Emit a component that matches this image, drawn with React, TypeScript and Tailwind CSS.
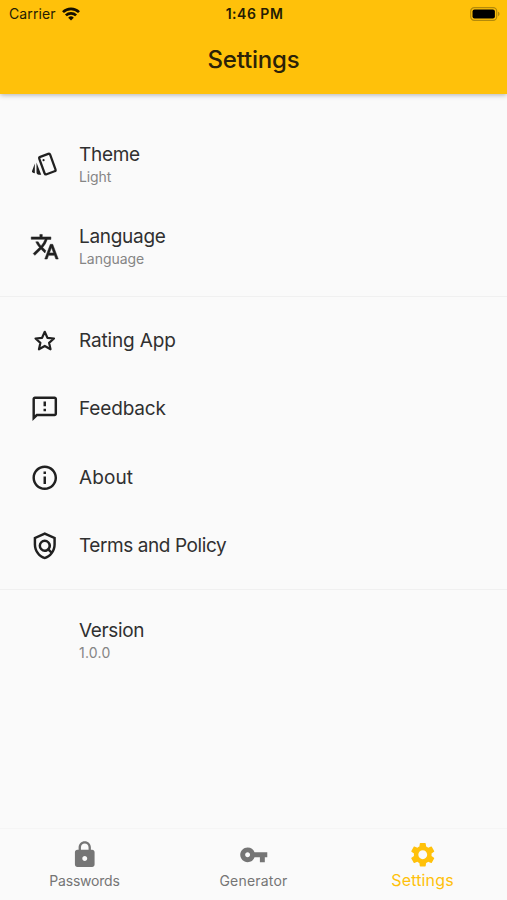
import React from 'react';
import {
  MdInfoOutline,
  MdLock,
  MdOutlineFeedback,
  MdOutlinePolicy,
  MdSettings,
  MdVpnKey,
} from 'react-icons/md';

interface Item {
  title: string;
  subtitle?: string;
  icon?: React.ComponentType<{ className?: string }>;
  titleClass: string;
  subtitleClass?: string;
}

const CardsIcon: React.FC<{ className?: string }> = ({ className }) => (
  <svg className={className} viewBox="0 0 30 30" fill="none">
    <rect
      x="11.8"
      y="4.9"
      width="11.8"
      height="18.8"
      rx="1.6"
      stroke="currentColor"
      strokeWidth="2.3"
      transform="rotate(-20 17.7 14.3)"
    />
    <circle cx="13.8" cy="10.3" r="1.1" fill="currentColor" />
    <path d="M4.9 13.8v9.9c-1.9-.4-3.1-1.2-2.9-2.2zM6.6 12.8l4.8 12.4H9.1c-1.6 0-2.5-1.1-2.5-2.6z" fill="currentColor" />
  </svg>
);

const TranslateIcon: React.FC<{ className?: string }> = ({ className }) => (
  <svg className={className} viewBox="0 0 24 24" fill="currentColor" stroke="currentColor" strokeWidth="0.4">
    <path d="M12.87 15.07l-2.54-2.51.03-.03A17.52 17.52 0 0 0 14.07 6H17V4h-7V2H8v2H1v1.99h11.17C11.5 7.92 10.44 9.75 9 11.35 8.07 10.32 7.3 9.19 6.69 8h-2c.73 1.63 1.73 3.17 2.98 4.56l-5.09 5.02L4 19l5-5 3.11 3.11.76-2.04zM18.5 10h-2L12 22h2l1.12-3h4.75L21 22h2l-4.5-12zm-2.62 7l1.62-4.33L19.12 17h-3.24z" />
  </svg>
);

const StarIcon: React.FC<{ className?: string }> = ({ className }) => (
  <svg className={className} viewBox="0 0 30 30" fill="none">
    <path
      d="M15 5.9l2.7 6.1 6.7.7-5 4.4 1.5 6.6-5.9-3.4-5.9 3.4 1.5-6.6-5-4.4 6.7-.7z"
      stroke="currentColor"
      strokeWidth="2.2"
      strokeLinejoin="round"
    />
  </svg>
);

const GENERAL: Item[] = [
  { title: 'Theme', subtitle: 'Light', icon: CardsIcon, titleClass: 'tracking-[-0.3px]', subtitleClass: 'tracking-[-0.1px]' },
  { title: 'Language', subtitle: 'Language', icon: TranslateIcon, titleClass: 'tracking-[-0.3px]', subtitleClass: 'tracking-[-0.05px]' },
];

const SUPPORT: Item[] = [
  { title: 'Rating App', icon: StarIcon, titleClass: 'tracking-[-0.15px]' },
  { title: 'Feedback', icon: MdOutlineFeedback, titleClass: 'tracking-[-0.15px]' },
  { title: 'About', icon: MdInfoOutline, titleClass: 'tracking-[0.1px]' },
  { title: 'Terms and Policy', icon: MdOutlinePolicy, titleClass: 'tracking-[-0.42px]' },
];

const VERSION: Item = { title: 'Version', subtitle: '1.0.0', titleClass: 'tracking-[-0.35px]', subtitleClass: 'tracking-[0.25px]' };

const SettingsRow: React.FC<{ item: Item }> = ({ item }) => {
  const Icon = item.icon;
  return (
    <button className={`flex w-full items-center pl-[30px] text-left ${item.subtitle ? 'h-[82px]' : 'h-[68.5px]'}`}>
      <span className="flex w-[49px] shrink-0">
        <span className="flex size-[29.5px] items-center justify-center text-[#202020]">
          {Icon && <Icon className="size-[29.5px]" />}
        </span>
      </span>
      <span className="flex flex-col">
        <span className={`text-[19px] leading-6 text-[#303030] ${item.titleClass}`}>{item.title}</span>
        {item.subtitle && (
          <span className={`text-[14px] leading-5 text-[#858585] ${item.subtitleClass}`}>{item.subtitle}</span>
        )}
      </span>
    </button>
  );
};

const StatusBar: React.FC = () => (
  <div className="grid h-[27px] grid-cols-3 items-center pl-[9px] pr-[7px] text-[14px] text-[#241c04]">
    <div className="flex items-center gap-[6px]">
      <span className="tracking-[0.1px]">Carrier</span>
      <svg width="18" height="14" viewBox="0 0 18 14" fill="none" stroke="#151000" strokeWidth="2.7">
        <path d="M1 5.1a11.4 11.4 0 0 1 16 0" />
        <path d="M3.9 8.4a7.3 7.3 0 0 1 10.2 0" />
        <path d="M9 13.6 6.2 10.7a4 4 0 0 1 5.6 0z" fill="#151000" stroke="none" />
      </svg>
    </div>
    <span className="text-center font-semibold tracking-[0.5px]">1:46 PM</span>
    <svg className="justify-self-end" width="30" height="14" viewBox="0 0 30 14">
      <rect x="0.7" y="0.7" width="26" height="12.6" rx="3.6" fill="none" stroke="#b48a0a" strokeWidth="1.2" />
      <rect x="2.5" y="2.5" width="22.4" height="9" rx="2" fill="#000" />
      <path d="M28 4.8c2 .6 2 3.8 0 4.4z" fill="#b48a0a" />
    </svg>
  </div>
);

const App: React.FC = () => (
  <div className="flex h-[900px] w-[507px] flex-col overflow-hidden bg-[#fafafa] font-['Inter',sans-serif]">
    <header className="z-10 h-[94px] shrink-0 bg-[#ffc10a] shadow-[0_1px_5px_rgba(0,0,0,0.3)]">
      <StatusBar />
      <h1 className="pt-[17px] text-center text-[24px] leading-8 font-medium tracking-[-0.2px] text-[#2b2208]">Settings</h1>
    </header>

    <main className="flex-1 pt-[30px]">
      <section className="border-b border-[#f0f0f0] pb-2">
        {GENERAL.map((item) => (
          <SettingsRow key={item.title} item={item} />
        ))}
      </section>
      <section className="border-b border-[#f0f0f0] pt-[9.3px] pb-[8.7px]">
        {SUPPORT.map((item) => (
          <SettingsRow key={item.title} item={item} />
        ))}
      </section>
      <section className="pt-[10px]">
        <SettingsRow item={VERSION} />
      </section>
    </main>

    <nav className="grid h-[72px] shrink-0 grid-cols-3 border-t border-[#f5f5f5] pt-[11px] text-[#757575]">
      <button className="flex flex-col items-center">
        <MdLock className="size-[29.5px]" />
        <span className="mt-px text-[14px] leading-5 tracking-[-0.2px]">Passwords</span>
      </button>
      <button className="flex flex-col items-center">
        <MdVpnKey className="size-[29.5px]" />
        <span className="mt-px text-[14px] leading-5 tracking-[0.2px]">Generator</span>
      </button>
      <button className="flex flex-col items-center text-[#ffc10a]">
        <MdSettings className="size-[29.5px]" />
        <span className="text-[16px] leading-5 tracking-[0.15px]">Settings</span>
      </button>
    </nav>
  </div>
);

export default App;
